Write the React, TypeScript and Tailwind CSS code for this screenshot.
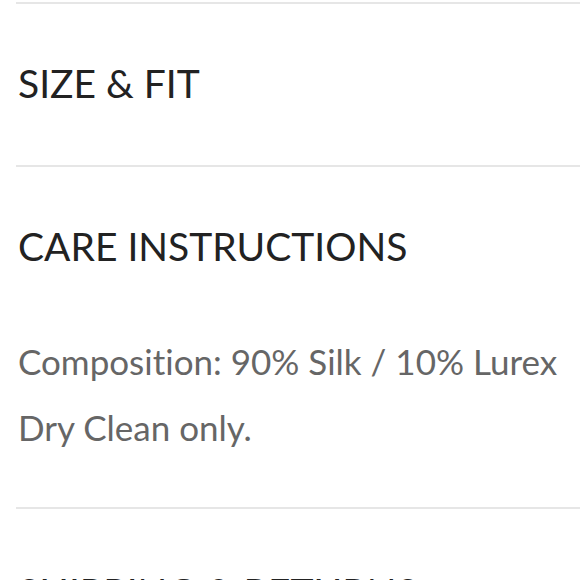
import React from 'react'

function Heading({ children }: { children: React.ReactNode }) {
  return (
    <h2 className="text-[39px] leading-[39px] text-[#222222] font-normal pl-[2px] whitespace-nowrap">
      {children}
    </h2>
  )
}

export default function App() {
  return (
    <div className="w-[580px] h-[580px] overflow-hidden bg-white pt-[2px] pl-4 font-['Lato',sans-serif] [font-variant-ligatures:none]">
      <section className="border-t-2 border-[#e6e6e6] pt-[60px] pb-[62px]">
        <Heading>SIZE &amp; FIT</Heading>
      </section>
      <section className="border-t-2 border-[#e6e6e6] pt-[60px] pb-[47px]">
        <Heading>CARE INSTRUCTIONS</Heading>
        <div className="mt-[62px] pl-[2px] text-[35px] leading-[66px] text-[#666666] whitespace-nowrap">
          <p>Composition: 90% Silk / 10% Lurex</p>
          <p>Dry Clean only.</p>
        </div>
      </section>
      <section className="border-t-2 border-[#e6e6e6] pt-[64px]">
        <Heading>SHIPPING &amp; RETURNS</Heading>
      </section>
    </div>
  )
}
